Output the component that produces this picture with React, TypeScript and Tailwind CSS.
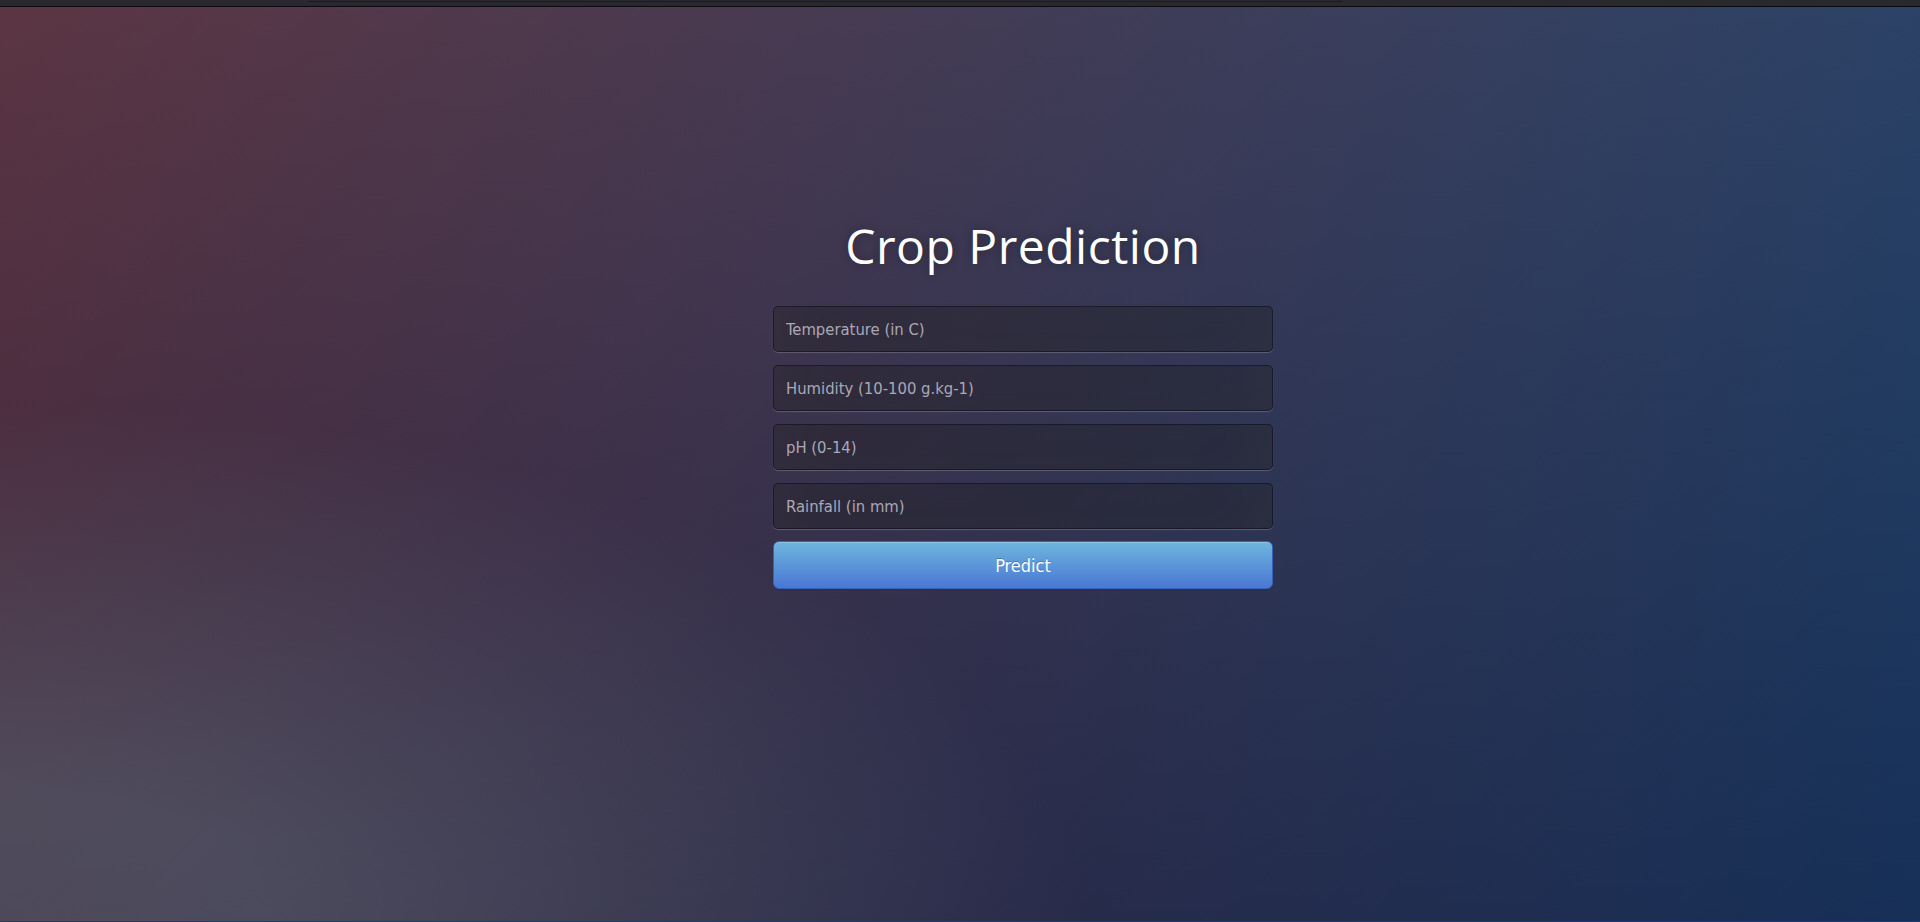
import React from "react";

const fields = [
  "Temperature (in C)",
  "Humidity (10-100 g.kg-1)",
  "pH (0-14)",
  "Rainfall (in mm)",
];

export default function App() {
  return (
    <div className="flex h-[922px] w-full flex-col overflow-hidden bg-[#092756]">
      <div className="flex h-[6px] shrink-0 flex-col bg-[#29282f]">
        <div className="ml-[308px] mt-[1px] h-[1px] w-[1034px] bg-[#1c1b21]" />
      </div>
      <div className="h-[1px] shrink-0 bg-[#0b0b0e]" />
      <main className="flex flex-1 justify-center bg-[radial-gradient(ellipse_farthest-corner_at_0%_100%,rgba(104,128,138,.4)_10%,rgba(138,114,76,0)_40%),linear-gradient(to_bottom,rgba(57,173,219,.25)_0%,rgba(42,60,87,.4)_100%),linear-gradient(135deg,#670d10_0%,#092756_100%)] pl-[126px] pt-[215px]">
        <div className="flex w-[500px] flex-col">
          <h1 className="text-center font-['Open_Sans',sans-serif] text-[48px] leading-[48px] tracking-[0.5px] text-white [text-shadow:0_0_10px_rgba(0,0,0,0.3)]">
            Crop Prediction
          </h1>
          <form className="mt-[36px] flex flex-col gap-[13px] font-['DejaVu_Sans_Condensed','Liberation_Sans',sans-serif]">
            {fields.map((f) => (
              <input
                key={f}
                type="text"
                placeholder={f}
                className="h-[46px] w-full rounded-[5px] border border-[rgba(0,0,0,0.3)] bg-[rgba(0,0,0,0.3)] px-[12px] text-[16.5px] text-white shadow-[inset_0_-8px_75px_rgba(100,100,100,0.2),0_1px_1px_rgba(255,255,255,0.2)] outline-none placeholder:text-[#aaa8b6]"
              />
            ))}
            <button
              type="button"
              className="mt-[-1px] h-[48px] w-full rounded-[6px] border border-[#3762bc] bg-[linear-gradient(to_bottom,#6eb6de,#4a77d4)] text-[18px] text-white [text-shadow:0_-1px_0_rgba(0,0,0,0.25)] shadow-[inset_0_1px_0_rgba(255,255,255,0.2),0_1px_2px_rgba(0,0,0,0.05)]"
            >
              Predict
            </button>
          </form>
        </div>
      </main>
      <div className="h-[1px] shrink-0 bg-[#1d3a80]" />
    </div>
  );
}
